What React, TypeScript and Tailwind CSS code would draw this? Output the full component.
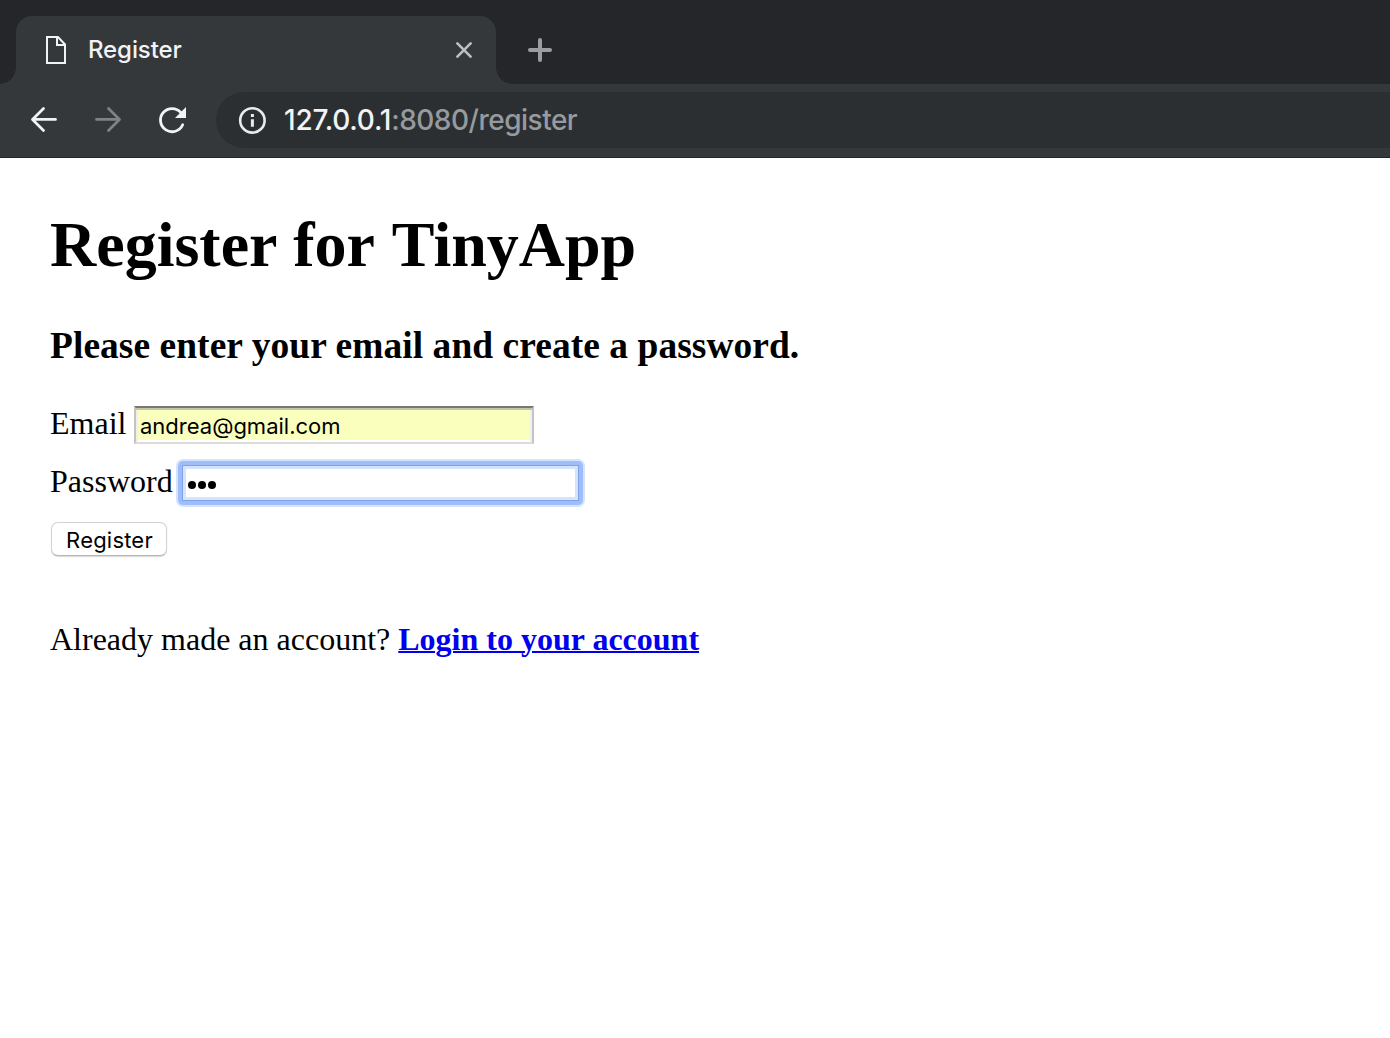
import type { ReactNode } from 'react';

function Tab() {
  return (
    <div className="relative ml-4 flex h-[68px] w-[480px] items-center rounded-t-2xl bg-[#35383b]">
      <div className="absolute bottom-0 -left-4 size-4 bg-[radial-gradient(circle_at_0_0,#242629_15.5px,#35383b_16px)]" />
      <div className="absolute -right-4 bottom-0 size-4 bg-[radial-gradient(circle_at_100%_0,#242629_15.5px,#35383b_16px)]" />
      <svg className="ml-[30px] h-7 w-5" viewBox="0 0 20 28" fill="none" stroke="#f1f3f4" strokeWidth="2">
        <path d="M1 1H12L19 8.5V27H1Z" />
        <path d="M11 1V9H19" />
      </svg>
      <span className="ml-[22px] text-[24px] leading-8 font-medium tracking-[-0.1px] text-[#f1f3f4]">Register</span>
      <svg className="mr-6 ml-auto size-4" viewBox="0 0 16 16" fill="none" stroke="#bdc0c3" strokeWidth="2.6" strokeLinecap="round">
        <path d="M1.4 1.4L14.6 14.6M14.6 1.4L1.4 14.6" />
      </svg>
    </div>
  );
}

function NavIcon({ color, children }: { color: string; children: ReactNode }) {
  return (
    <svg className="size-8" viewBox="0 0 32 32" fill="none" stroke={color} strokeWidth="2.8" strokeLinecap="round" strokeLinejoin="round">
      {children}
    </svg>
  );
}

function Toolbar() {
  return (
    <div className="flex h-[74px] items-start border-b border-[#232527] bg-[#35383b] pt-2">
      <div className="ml-7 flex h-14 items-center gap-8">
        <NavIcon color="#f1f3f4">
          <path d="M27.5 15.4H4.7M15.5 4.4L4.5 15.4L15.5 26.4" />
        </NavIcon>
        <NavIcon color="#808385">
          <path d="M4.5 15.4H27.3M16.5 4.4L27.5 15.4L16.5 26.4" />
        </NavIcon>
        <NavIcon color="#f1f3f4">
          <path d="M26.7 20.8A11.6 11.6 0 1 1 24.9 8.6" />
          <path d="M30 3V14H19Z" fill="#f1f3f4" stroke="none" />
        </NavIcon>
      </div>
      <div className="ml-7 flex h-14 flex-1 items-center rounded-l-full bg-[#2c2f32]">
        <svg className="ml-[22px] size-7" viewBox="0 0 28 28" fill="none" stroke="#e8eaed" strokeWidth="2.6">
          <circle cx="14.4" cy="14.4" r="12.2" />
          <path d="M14.4 13.2V20.8M14.4 8V11" strokeWidth="3" />
        </svg>
        <span className="ml-[18px] text-[28px] leading-9 font-medium tracking-[-0.5px] whitespace-nowrap text-[#979b9f]">
          <span className="tracking-[-0.22px] text-[#f1f3f4]">127.0.0.1</span>:8080/register
        </span>
      </div>
    </div>
  );
}

export default function App() {
  return (
    <div className="h-[1038px] w-[1390px] overflow-hidden bg-white font-['Inter',sans-serif]">
      <header className="bg-[#242629] pt-4">
        <div className="flex">
          <Tab />
          <svg className="mt-[22px] ml-8 size-6" viewBox="0 0 24 24" stroke="#9a9ea2" strokeWidth="4" strokeLinecap="round">
            <path d="M12 2V22M2 12H22" />
          </svg>
        </div>
        <Toolbar />
      </header>
      <main className="pt-[51px] pl-[50px] font-['Liberation_Serif',serif] text-[32px] leading-9 text-black">
        <h1 className="text-[64px] leading-[72px] font-bold">
          Register <span className="ml-px">for</span> <span className="ml-[2px]">TinyApp</span>
        </h1>
        <h3 className="mt-[44px] text-[37.44px] leading-[42px] font-bold tracking-[0.065px]">
          Please enter your email and create a password.
        </h3>
        <form className="mt-[38px]">
          <div className="flex h-[58px] items-start">
            <label className="w-[84px]">Email</label>
            <input
              type="text"
              defaultValue="andrea@gmail.com"
              className="mt-px h-[38px] w-[400px] border-2 border-t-[#777] border-r-[#c4c4c4] border-b-[#dcdcdc] border-l-[#c4c4c4] bg-[#faffbd] pt-px pl-1 font-['Inter',sans-serif] text-[22px] shadow-[inset_0_2px_0_#c4c5a5,inset_2px_0_0_#efefef,inset_-2px_0_0_#efefef,inset_0_-2px_0_#fff] outline-none"
            />
          </div>
          <div className="flex h-[58px] items-start">
            <label className="w-[128px]">Password</label>
            <div className="-mt-[2px] rounded-[5px] bg-[#9dbdfb] p-1 shadow-[0_0_0_2px_#d5e3fd]">
              <div className="flex h-9 w-[397px] items-center gap-[2.6px] border border-[#7fa3e6] bg-white pt-1 pl-[5px] shadow-[inset_0_0_0_3px_#d5e3fd]">
                <span className="size-[7.6px] rounded-full bg-black" />
                <span className="size-[7.6px] rounded-full bg-black" />
                <span className="size-[7.6px] rounded-full bg-black" />
              </div>
            </div>
          </div>
          <button
            type="button"
            className="mt-px ml-px block h-[34px] w-[116px] rounded-[7px] border border-[#d2d2d2] border-b-[#b8b8b8] bg-white pt-px pl-px font-['Inter',sans-serif] text-[22px] leading-8 tracking-[0.2px] shadow-[0_1px_1px_#d8d8d8]"
          >
            Register
          </button>
        </form>
        <p className="mt-[65px] whitespace-nowrap">
          Already made an account?{' '}
          <a href="#login" className="font-bold text-[#0000ee] underline decoration-2">Login to your account</a>
        </p>
      </main>
    </div>
  );
}
